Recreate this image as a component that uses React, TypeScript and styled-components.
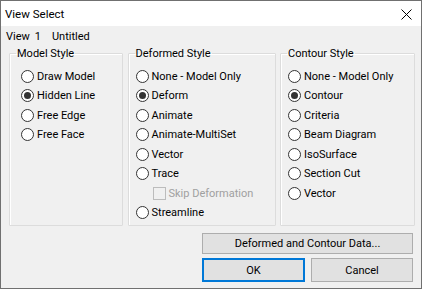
import React, { useState } from 'react';
import styled, { createGlobalStyle } from 'styled-components';

const GlobalStyle = createGlobalStyle`
  html, body {
    margin: 0;
    padding: 0;
    background: #ffffff;
  }
  * {
    box-sizing: border-box;
  }
`;

type Item = { label: string; key: string };

const modelItems: Item[] = [
  { key: 'draw', label: 'Draw Model' },
  { key: 'hidden', label: 'Hidden Line' },
  { key: 'edge', label: 'Free Edge' },
  { key: 'face', label: 'Free Face' },
];

const deformItems: Item[] = [
  { key: 'none', label: 'None - Model Only' },
  { key: 'deform', label: 'Deform' },
  { key: 'animate', label: 'Animate' },
  { key: 'multi', label: 'Animate-MultiSet' },
  { key: 'vector', label: 'Vector' },
  { key: 'trace', label: 'Trace' },
];

const contourItems: Item[] = [
  { key: 'none', label: 'None - Model Only' },
  { key: 'contour', label: 'Contour' },
  { key: 'criteria', label: 'Criteria' },
  { key: 'beam', label: 'Beam Diagram' },
  { key: 'iso', label: 'IsoSurface' },
  { key: 'section', label: 'Section Cut' },
  { key: 'vector', label: 'Vector' },
];

const App: React.FC = () => {
  const [model, setModel] = useState('hidden');
  const [deform, setDeform] = useState('deform');
  const [contour, setContour] = useState('contour');

  const renderRadio = (item: Item, value: string, onPick: (k: string) => void) => (
    <Row key={item.key} onClick={() => onPick(item.key)}>
      <Radio $checked={value === item.key} />
      <Label>{item.label}</Label>
    </Row>
  );

  return (
    <>
      <GlobalStyle />
      <Window>
        <TitleBar>
          <Title>View Select</Title>
          <CloseButton aria-label="Close">
            <svg width="11" height="11" viewBox="0 0 11 11">
              <path d="M0.5 0.5 L10.5 10.5 M10.5 0.5 L0.5 10.5" stroke="#000" strokeWidth="1" />
            </svg>
          </CloseButton>
        </TitleBar>

        <Body>
          <InfoRow>
            <span>View</span>
            <ViewNo>1</ViewNo>
            <span>Untitled</span>
          </InfoRow>

          <Groups>
            <Group>
              <Legend>Model Style</Legend>
              <List $indent={5}>
                {modelItems.map((it) => renderRadio(it, model, setModel))}
              </List>
            </Group>

            <Group>
              <Legend>Deformed Style</Legend>
              <List $indent={1}>
                {deformItems.map((it) => renderRadio(it, deform, setDeform))}
                <Row $indent={17}>
                  <CheckBox />
                  <Label $disabled>Skip Deformation</Label>
                </Row>
                {renderRadio({ key: 'stream', label: 'Streamline' }, deform, setDeform)}
              </List>
            </Group>

            <Group>
              <Legend>Contour Style</Legend>
              <List $indent={1}>
                {contourItems.map((it) => renderRadio(it, contour, setContour))}
              </List>
            </Group>
          </Groups>

          <Buttons>
            <WideButton>Deformed and Contour Data...</WideButton>
            <ButtonRow>
              <Button $default>OK</Button>
              <Button>Cancel</Button>
            </ButtonRow>
          </Buttons>
        </Body>
      </Window>
    </>
  );
};

export default App;

/* ====================== Styled Components ====================== */

const Window = styled.div`
  width: 422px;
  height: 289px;
  display: flex;
  flex-direction: column;
  border: 1px solid #707070;
  font-family: Roboto, 'Noto Sans', sans-serif;
  font-size: 11px;
  color: #000000;
`;

const TitleBar = styled.div`
  height: 25px;
  flex: none;
  display: flex;
  align-items: center;
  justify-content: space-between;
  padding: 0 9px 0 4px;
  background: #ffffff;
`;

const Title = styled.span`
  font-size: 11.5px;
`;

const CloseButton = styled.div`
  width: 11px;
  height: 11px;
  display: flex;
  margin-top: 1px;
`;

const Body = styled.div`
  flex: 1;
  display: flex;
  flex-direction: column;
  background: #f0f0f0;
`;

const InfoRow = styled.div`
  height: 19.5px;
  display: flex;
  align-items: center;
  padding: 1px 0 0 5px;
`;

const ViewNo = styled.span`
  margin: 0 11px 0 5px;
`;

const Groups = styled.div`
  display: grid;
  grid-template-columns: 114px 148px 135px;
  justify-content: space-between;
  padding: 0 6px 0 8px;
  height: 180.5px;
`;

const Group = styled.fieldset`
  margin: 0;
  padding: 6px 0 0 6px;
  min-width: 0;
  border: 1px solid #dcdcdc;
  border-radius: 1px;
  box-shadow: inset 1px 1px 0 #ffffff;
`;

const Legend = styled.legend`
  padding: 0 1px;
  line-height: 15px;
`;

const List = styled.div<{ $indent: number }>`
  display: flex;
  flex-direction: column;
  padding-left: ${(p) => p.$indent}px;
`;

const Row = styled.div<{ $indent?: number }>`
  height: 19.5px;
  display: flex;
  align-items: center;
  gap: 3px;
  padding-left: ${(p) => p.$indent ?? 0}px;
  cursor: default;
  white-space: nowrap;
`;

const Radio = styled.span<{ $checked?: boolean }>`
  width: 13px;
  height: 13px;
  flex: none;
  border: 1px solid #333333;
  border-radius: 50%;
  background: #ffffff;
  display: flex;
  align-items: center;
  justify-content: center;

  &::after {
    content: '';
    width: 7px;
    height: 7px;
    border-radius: 50%;
    background: ${(p) => (p.$checked ? '#333333' : 'transparent')};
  }
`;

const CheckBox = styled.span`
  width: 13px;
  height: 13px;
  flex: none;
  border: 1px solid #bcbcbc;
  background: #f0f0f0;
`;

const Label = styled.span<{ $disabled?: boolean }>`
  color: ${(p) => (p.$disabled ? '#a0a0a0' : '#000000')};
  line-height: 15px;
`;

const Buttons = styled.div`
  display: flex;
  flex-direction: column;
  align-items: flex-end;
  gap: 4px;
  padding: 7px 8px 0 0;
`;

const WideButton = styled.button`
  width: 211px;
  height: 21px;
  background: #e1e1e1;
  border: 1px solid #adadad;
  font-family: inherit;
  font-size: 11px;
  color: #000000;
  padding: 0;
`;

const ButtonRow = styled.div`
  display: flex;
  gap: 6px;
`;

const Button = styled.button<{ $default?: boolean }>`
  width: ${(p) => (p.$default ? 103 : 102)}px;
  height: 24px;
  background: #e1e1e1;
  border: ${(p) => (p.$default ? '2px solid #0078d7' : '1px solid #adadad')};
  font-family: inherit;
  font-size: 11px;
  color: #000000;
  padding: 0;
`;
